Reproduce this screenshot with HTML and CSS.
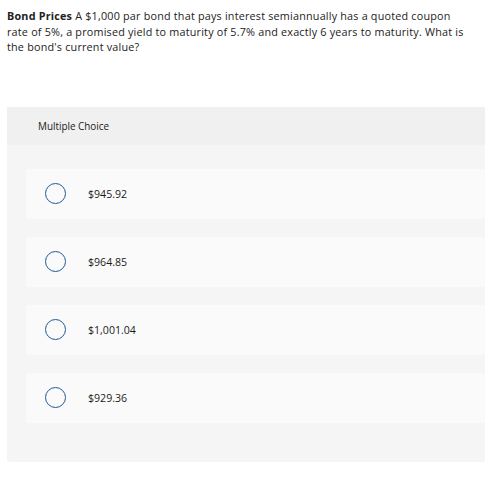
FILE: index.html
```html
<!DOCTYPE html>
<html lang="en">
<head>
    <meta charset="UTF-8">
    <meta name="viewport" content="width=device-width, initial-scale=1.0">
    <title>Bond Prices</title>
    <link rel="stylesheet" href="styles.css">
</head>
<body>
    <div class="question">
        <p><strong>Bond Prices</strong> A $1,000 par bond that pays interest semiannually has a quoted coupon rate of 5%, a promised yield to maturity of 5.7% and exactly 6 years to maturity. What is the bond's current value?</p>
    </div>

    <div class="panel">
        <div class="panel-header">Multiple Choice</div>
        <div class="panel-body">
            <div class="choice">
                <span class="radio"></span>
                <span class="choice-label">$945.92</span>
            </div>
            <div class="choice">
                <span class="radio"></span>
                <span class="choice-label">$964.85</span>
            </div>
            <div class="choice">
                <span class="radio"></span>
                <span class="choice-label">$1,001.04</span>
            </div>
            <div class="choice">
                <span class="radio"></span>
                <span class="choice-label">$929.36</span>
            </div>
        </div>
    </div>
</body>
</html>
```

FILE: styles.css
```css
html {
    overflow: hidden;
}
body {
    font-family: 'Open Sans', 'Liberation Sans', sans-serif;
    margin: 0;
    padding: 0 0 0 7px;
    background: white;
    color: #222;
}
.question p {
    margin: 0;
    padding-top: 8px;
    width: 462px;
    font-size: 10.8px;
    letter-spacing: 0.2px;
    line-height: 15.5px;
}
.question strong {
    font-weight: 700;
}
.panel {
    margin-top: 52px;
    width: 500px;
    background: #f5f5f5;
    border-radius: 2px;
}
.panel-header {
    background: #f0f0f0;
    height: 38px;
    line-height: 38px;
    padding-left: 31px;
    font-size: 9.9px;
    color: #1a1a1a;
}
.panel-body {
    padding: 24px 0 39px 19px;
    display: flex;
    flex-direction: column;
    gap: 18px;
}
.choice {
    background: #fafafa;
    height: 50px;
    border-radius: 3px;
    display: flex;
    align-items: center;
    padding-left: 19px;
}
.radio {
    width: 19px;
    height: 19px;
    border: 1.5px solid #1f5a96;
    border-radius: 50%;
    flex: none;
}
.choice-label {
    margin-left: 22px;
    font-size: 10.6px;
    color: #1a1a1a;
}
```
